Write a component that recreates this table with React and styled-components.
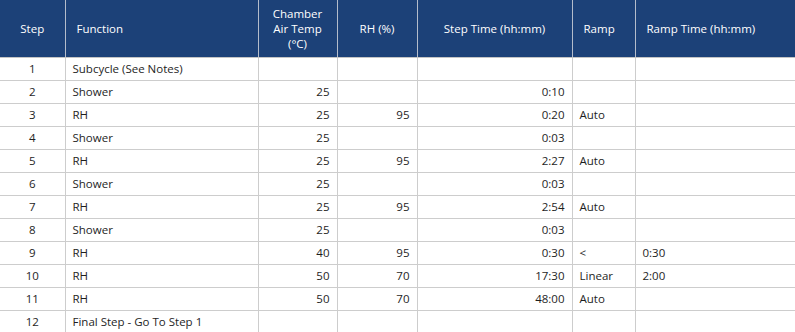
import React from "react";
import styled, { createGlobalStyle } from "styled-components";

const GlobalStyle = createGlobalStyle`
  body {
    margin: 0;
    background: #fff;
    font-family: "Open Sans", "Noto Sans", sans-serif;
  }
`;

const columns = [
  { key: "step", label: "Step", width: 65, align: "center", head: "center" },
  { key: "fn", label: "Function", width: 193, align: "left", head: "left" },
  { key: "temp", label: "Chamber Air Temp (°C)", width: 79, align: "right", head: "center" },
  { key: "rh", label: "RH (%)", width: 80, align: "right", head: "center" },
  { key: "time", label: "Step Time (hh:mm)", width: 155, align: "right", head: "center" },
  { key: "ramp", label: "Ramp", width: 63, align: "left", head: "left" },
  { key: "rampTime", label: "Ramp Time (hh:mm)", width: 160, align: "left", head: "left" },
];

const rows = [
  { step: 1, fn: "Subcycle (See Notes)" },
  { step: 2, fn: "Shower", temp: "25", time: "0:10" },
  { step: 3, fn: "RH", temp: "25", rh: "95", time: "0:20", ramp: "Auto" },
  { step: 4, fn: "Shower", temp: "25", time: "0:03" },
  { step: 5, fn: "RH", temp: "25", rh: "95", time: "2:27", ramp: "Auto" },
  { step: 6, fn: "Shower", temp: "25", time: "0:03" },
  { step: 7, fn: "RH", temp: "25", rh: "95", time: "2:54", ramp: "Auto" },
  { step: 8, fn: "Shower", temp: "25", time: "0:03" },
  { step: 9, fn: "RH", temp: "40", rh: "95", time: "0:30", ramp: "<", rampTime: "0:30" },
  { step: 10, fn: "RH", temp: "50", rh: "70", time: "17:30", ramp: "Linear", rampTime: "2:00" },
  { step: 11, fn: "RH", temp: "50", rh: "70", time: "48:00", ramp: "Auto" },
  { step: 12, fn: "Final Step - Go To Step 1" },
];

const Table = styled.table`
  width: 795px;
  table-layout: fixed;
  border-collapse: collapse;
  font-size: 11.5px;
  color: #1e1e1e;
`;

const HeadCell = styled.th`
  height: 57px;
  padding: 0 11px;
  background: #1c4178;
  color: #fff;
  font-weight: 400;
  line-height: 15px;
  text-align: ${(p) => p.$align};
  border-left: 1px solid #b4bccb;
  border-bottom: 1px solid #c4c4c4;
  box-sizing: border-box;
  &:first-child {
    border-left: none;
  }
`;

const Cell = styled.td`
  height: 22px;
  padding: 0 7px;
  text-align: ${(p) => p.$align};
  border: 1px solid #cdcdcd;
  border-top: none;
  white-space: nowrap;
  &:first-child {
    border-left: none;
  }
  &:last-child {
    border-right: none;
  }
`;

export default function App() {
  return (
    <>
      <GlobalStyle />
      <Table>
        <colgroup>
          {columns.map((c) => (
            <col key={c.key} style={{ width: c.width }} />
          ))}
        </colgroup>
        <thead>
          <tr>
            {columns.map((c) => (
              <HeadCell key={c.key} $align={c.head}>
                {c.key === "temp" ? (
                  <>
                    Chamber
                    <br />
                    Air Temp
                    <br />
                    (°C)
                  </>
                ) : (
                  c.label
                )}
              </HeadCell>
            ))}
          </tr>
        </thead>
        <tbody>
          {rows.map((r) => (
            <tr key={r.step}>
              {columns.map((c) => (
                <Cell key={c.key} $align={c.align}>
                  {r[c.key]}
                </Cell>
              ))}
            </tr>
          ))}
        </tbody>
      </Table>
    </>
  );
}
